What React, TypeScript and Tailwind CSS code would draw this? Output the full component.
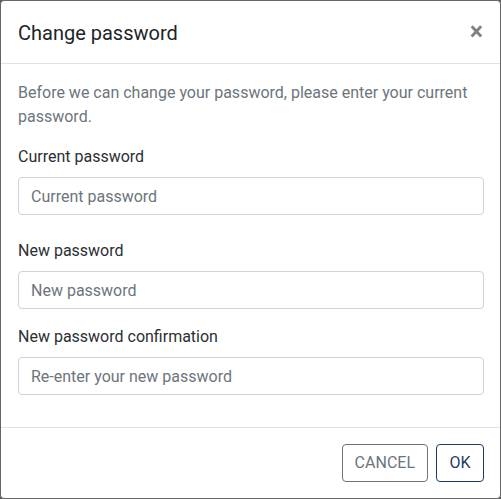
import React from 'react';

const fields = [
  { label: 'Current password', placeholder: 'Current password', mb: 'mb-[23px]' },
  { label: 'New password', placeholder: 'New password', mb: 'mb-[15px]' },
  { label: 'New password confirmation', placeholder: 'Re-enter your new password', mb: 'mb-[32px]' },
];

const App: React.FC = () => {
  return (
    <div className="w-[501px] h-[499px] bg-[#5a5a5a]" style={{ fontFamily: 'Roboto, "Liberation Sans", sans-serif' }}>
      <div className="w-full h-full bg-white border border-[#666666] rounded-[4px] flex flex-col">
        <div className="flex items-start justify-between pl-[17px] pr-[16px] pt-[17px] pb-[15px] border-b border-[#dee2e6]">
          <h5 className="text-[20px] leading-[30px] text-[#212529] font-normal">Change password</h5>
          <button className="text-[25px] leading-none font-bold text-[#000000]/50 mt-[1px] mr-[1px]">×</button>
        </div>
        <div className="pl-[17px] pr-[16px] pt-[17px]">
          <p className="text-[16px] leading-[24px] text-[#6c757d] mb-[15px]">
            Before we can change your password, please enter your current password.
          </p>
          {fields.map((f) => (
            <div key={f.label} className={f.mb}>
              <label className="block text-[16px] leading-[24px] text-[#2b2f33] pt-[1px] mb-[8px]">{f.label}</label>
              <input
                type="password"
                placeholder={f.placeholder}
                className="block w-full h-[38px] px-3 text-[16px] border border-[#ced4da] rounded-[4px] text-[#495057] placeholder:text-[#6c757d] outline-none"
              />
            </div>
          ))}
        </div>
        <div className="flex justify-end gap-2 pl-[17px] pr-[16px] pt-[16px] border-t border-[#dee2e6]">
          <button className="h-[38px] px-3 text-[16px] uppercase text-[#6c757d] border border-[#6c757d] rounded-[4px]">Cancel</button>
          <button className="h-[38px] w-[48px] text-[16px] uppercase text-[#1d3b64] border border-[#1d3b64] rounded-[4px]">OK</button>
        </div>
      </div>
    </div>
  );
};

export default App;
